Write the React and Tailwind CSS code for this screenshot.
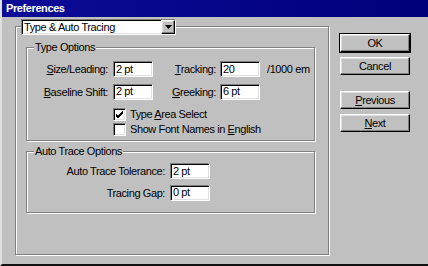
import React from 'react';

const sunken = 'bg-white border border-t-[#808080] border-l-[#808080] border-b-white border-r-white shadow-[inset_1px_1px_0_#000,inset_-1px_-1px_0_#dfdfdf]';
const raised = 'bg-[#c0c0c0] border border-t-white border-l-white border-b-black border-r-black shadow-[inset_-1px_-1px_0_#808080,inset_1px_1px_0_#dfdfdf]';
const etched = 'border border-[#808080] shadow-[inset_1px_1px_0_#fff,1px_1px_0_#fff]';

const Field = ({ value }) => (
  <div className={`${sunken} w-[40px] h-[16px] pl-[2px] flex items-center leading-none`}>{value}</div>
);

const Check = ({ checked, children }) => (
  <div className="flex items-center h-[14px] ml-[86px]">
    <div className={`${sunken} w-[13px] h-[13px] flex items-center justify-center`}>
      {checked && (
        <svg width="9" height="9" viewBox="0 0 9 9">
          <path d="M1 4 L3 6 L8 1 M1 5 L3 7 L8 2 M1 6 L3 8 L8 3" stroke="#000" strokeWidth="1" fill="none" />
        </svg>
      )}
    </div>
    <span className="ml-[4px]">{children}</span>
  </div>
);

const Btn = ({ children, isDefault }) => (
  <div className={isDefault ? 'border border-black' : 'p-px'}>
    <div className={`${raised} w-[70px] h-[18px] flex items-center justify-center`}>{children}</div>
  </div>
);

export default function App() {
  return (
    <div
      className="w-[428px] h-[266px] bg-[#c0c0c0] text-black text-[11px] tracking-[-0.4px] overflow-hidden flex flex-col border-l-2 border-l-[#dfdfdf] border-b-2 border-b-[#101010]"
      style={{ fontFamily: '"Liberation Sans", Arial, sans-serif' }}
    >
      {/* title bar */}
      <div className="h-[17px] shrink-0 bg-gradient-to-r from-[#0c0c98] to-[#00007a] flex items-center pl-[4px]">
        <span className="text-white font-bold">Preferences</span>
      </div>

      <div className="flex flex-1 pl-[13px]">
        {/* left column */}
        <div className="w-[314px] flex flex-col">
          <div className={`${sunken} relative z-10 mt-[2px] ml-[6px] w-[155px] h-[16px] flex items-center pl-[2px]`}>
            <span className="flex-1 leading-none">Type &amp; Auto Tracing</span>
            <div className={`${raised} w-[14px] h-[14px] flex items-center justify-center`}>
              <svg width="7" height="4" viewBox="0 0 7 4"><path d="M0 0H7L3.5 4Z" fill="#000" /></svg>
            </div>
          </div>

          <div className={`${etched} -mt-[9px] h-[229px] pl-[10px] pt-[14px]`}>
            <fieldset className={`${etched} w-[289px] h-[100px]`}>
              <legend className="ml-[7px] px-[1px] leading-[13px] bg-[#c0c0c0]">Type Options</legend>
              <div className="flex flex-col">
                <div className="flex items-center mt-[7px]">
                  <span className="w-[81px] text-right"><u>S</u>ize/Leading:</span>
                  <div className="ml-[5px]"><Field value="2 pt" /></div>
                  <span className="w-[63px] text-right"><u>T</u>racking:</span>
                  <div className="ml-[4px]"><Field value="20" /></div>
                  <span className="ml-[7px]">/1000 em</span>
                </div>
                <div className="flex items-center mt-[6px]">
                  <span className="w-[81px] text-right"><u>B</u>aseline Shift:</span>
                  <div className="ml-[5px]"><Field value="2 pt" /></div>
                  <span className="w-[63px] text-right"><u>G</u>reeking:</span>
                  <div className="ml-[4px]"><Field value="6 pt" /></div>
                </div>
                <div className="mt-[7px]">
                  <Check checked>Type <u>A</u>rea Select</Check>
                </div>
                <div className="mt-[1px]">
                  <Check>Show Font Names in <u>E</u>nglish</Check>
                </div>
              </div>
            </fieldset>

            <fieldset className={`${etched} w-[289px] h-[68px] mt-[4px]`}>
              <legend className="ml-[7px] px-[1px] leading-[13px] bg-[#c0c0c0]">Auto Trace Options</legend>
              <div className="flex flex-col">
                <div className="flex items-center mt-[5px]">
                  <span className="w-[138px] text-right">Auto Trace Tolerance:</span>
                  <div className="ml-[5px]"><Field value="2 pt" /></div>
                </div>
                <div className="flex items-center mt-[5px]">
                  <span className="w-[138px] text-right">Tracing Gap:</span>
                  <div className="ml-[5px]"><Field value="0 pt" /></div>
                </div>
              </div>
            </fieldset>
          </div>
        </div>

        {/* buttons */}
        <div className="ml-[10px] mt-[16px] flex flex-col">
          <Btn isDefault>OK</Btn>
          <div className="mt-[3px]"><Btn>Cancel</Btn></div>
          <div className="mt-[14px]"><Btn><span><u>P</u>revious</span></Btn></div>
          <div className="mt-[3px]"><Btn><span><u>N</u>ext</span></Btn></div>
        </div>
      </div>
    </div>
  );
}
